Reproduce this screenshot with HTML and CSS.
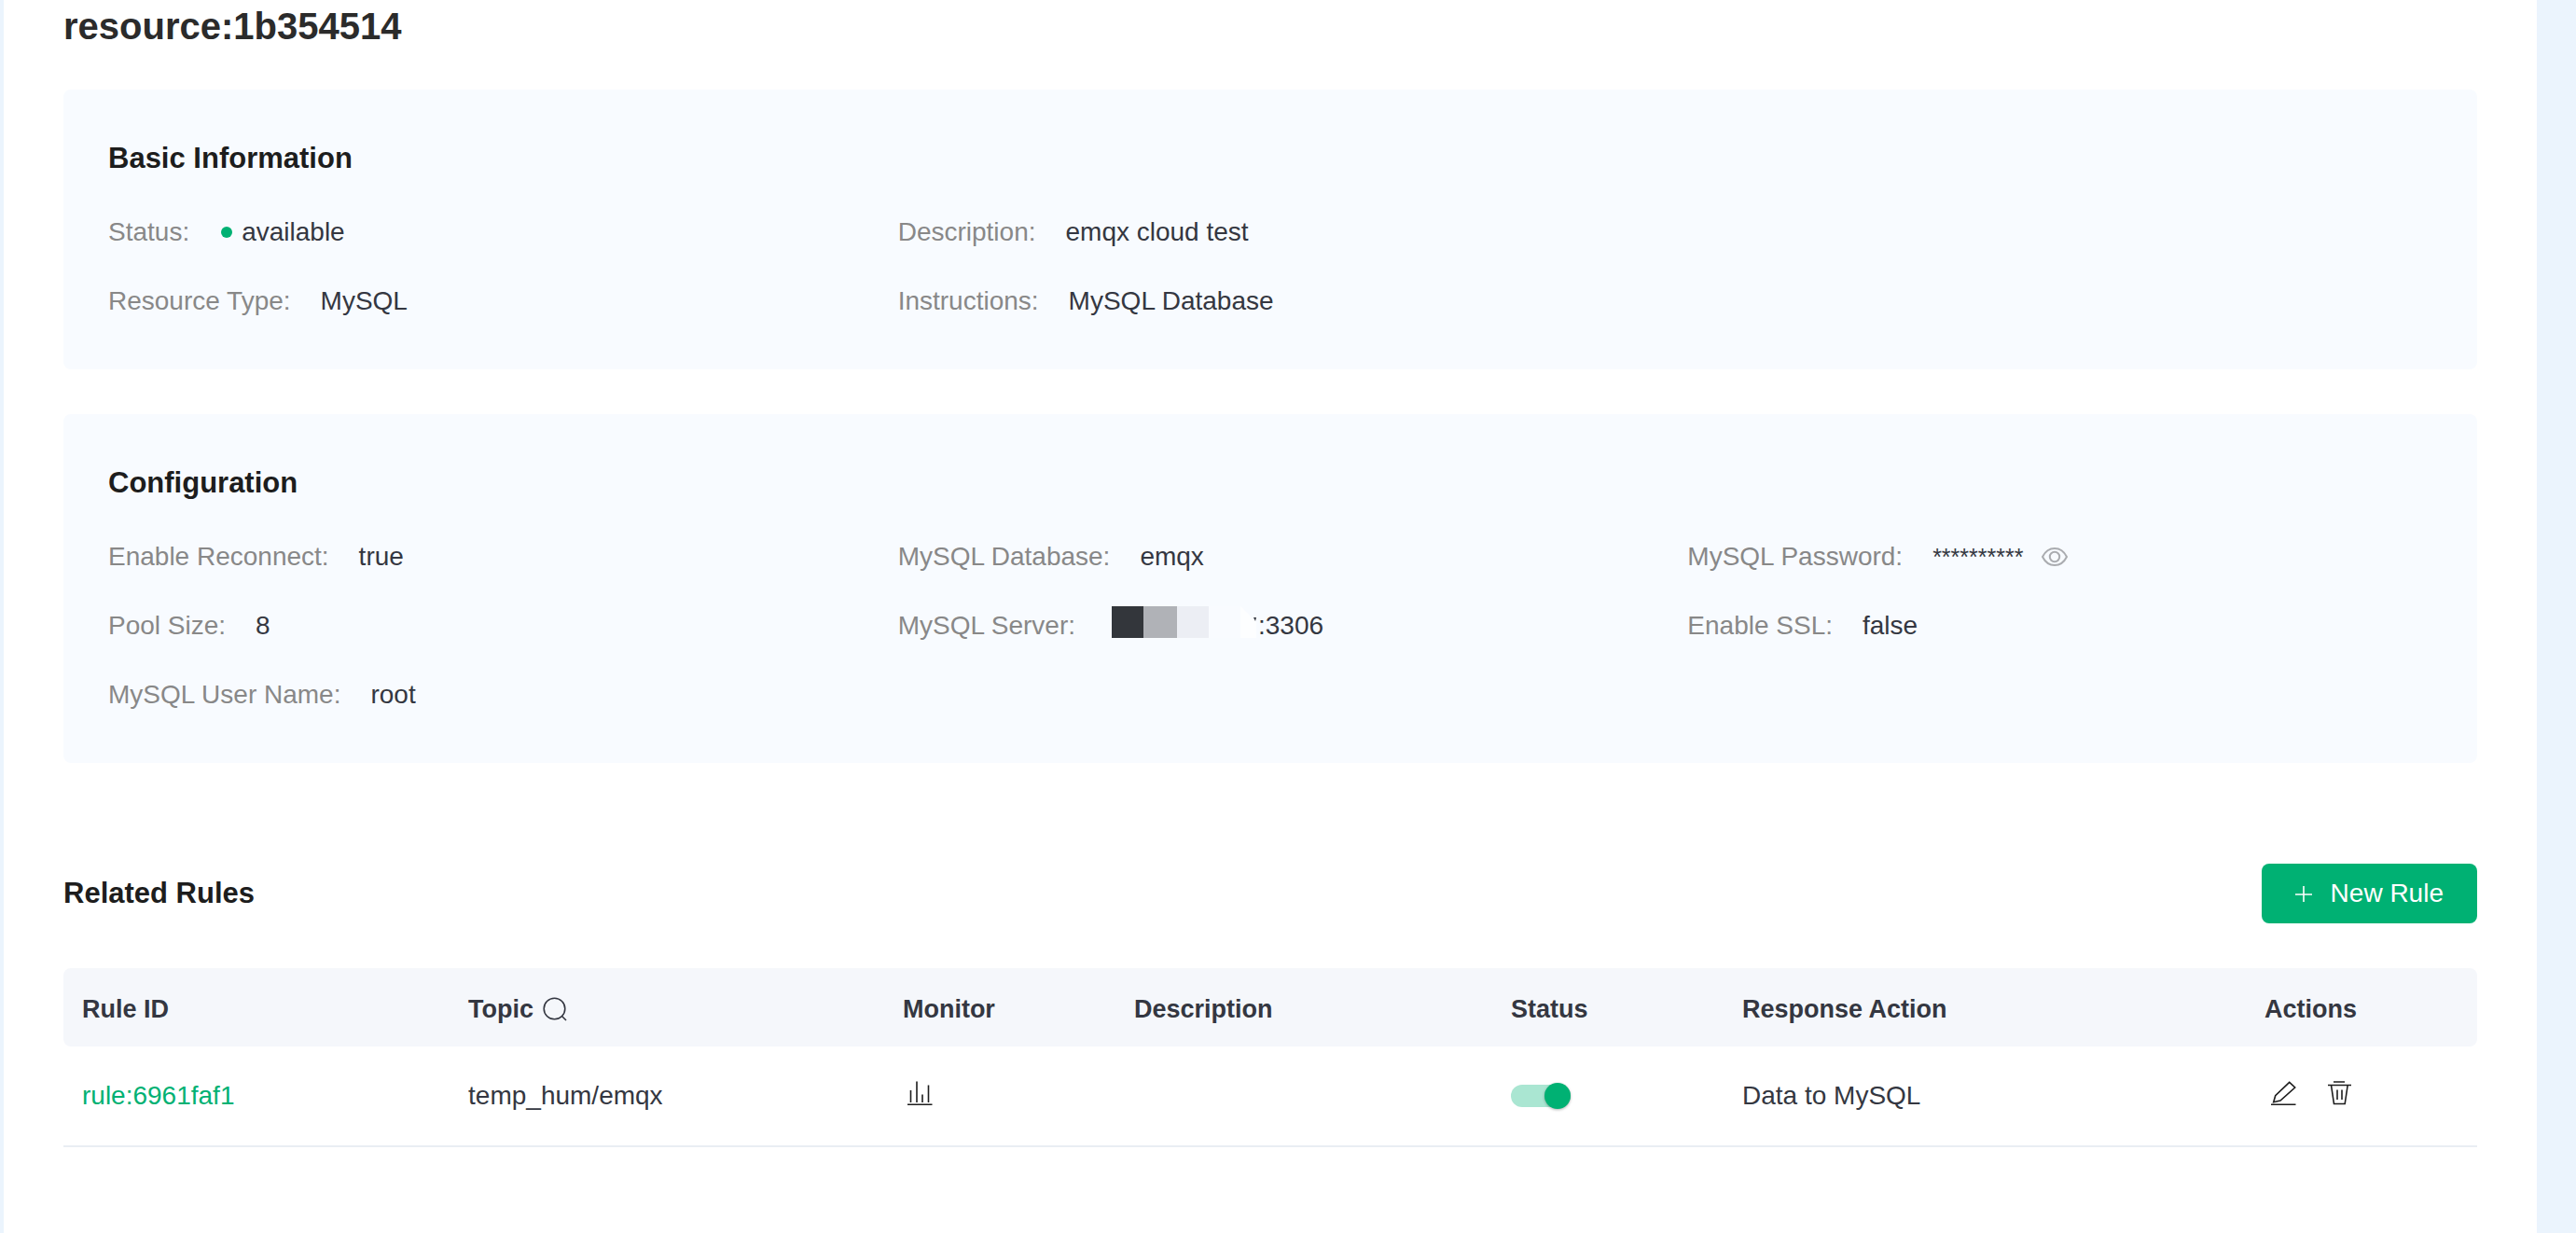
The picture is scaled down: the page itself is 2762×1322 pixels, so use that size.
FILE: index.html
```html
<!DOCTYPE html>
<html lang="en">
<head>
<meta charset="utf-8">
<title>resource:1b354514</title>
<link rel="stylesheet" href="styles.css">
</head>
<body>
<main class="page">
  <h1 class="page-title">resource:1b354514</h1>

  <section class="card">
    <h2 class="section-title">Basic Information</h2>
    <dl class="info-grid">
      <div class="info"><dt>Status:</dt><dd class="status"><span class="dot"></span>available</dd></div>
      <div class="info wide"><dt>Description:</dt><dd>emqx cloud test</dd></div>
      <div class="info"><dt>Resource Type:</dt><dd>MySQL</dd></div>
      <div class="info wide"><dt>Instructions:</dt><dd>MySQL Database</dd></div>
    </dl>
  </section>

  <section class="card">
    <h2 class="section-title">Configuration</h2>
    <dl class="info-grid">
      <div class="info"><dt>Enable Reconnect:</dt><dd>true</dd></div>
      <div class="info"><dt>MySQL Database:</dt><dd>emqx</dd></div>
      <div class="info"><dt>MySQL Password:</dt>
        <dd class="password"><span class="mask">**********</span>
          <button class="icon-button" type="button" aria-label="Show password">
            <svg class="eye" viewBox="0 0 28 28"><path d="M1 14C4 8 8.500 5 14 5s10 3 13 9c-3 6-7.500 9-13 9S4 20 1 14z"/><circle cx="14" cy="14" r="5.200"/></svg>
          </button>
        </dd>
      </div>
      <div class="info"><dt>Pool Size:</dt><dd>8</dd></div>
      <div class="info"><dt>MySQL Server:</dt>
        <dd class="server">
          <svg class="mosaic" viewBox="0 0 164 36" aria-hidden="true">
            <rect x="7" width="34" height="34" fill="#33363b"/>
            <rect x="41" width="36" height="34" fill="#b0b2b7"/>
            <rect x="77" width="34" height="34" fill="#eceef4"/>
            <rect x="111" width="34" height="34" fill="#f9fbff"/>
            <path d="M145 0l17 17v17h-17z" fill="#fdfeff"/>
            <path d="M159 12h3l-1 4z" fill="#33363f"/>
          </svg>:3306</dd>
      </div>
      <div class="info"><dt>Enable SSL:</dt><dd>false</dd></div>
      <div class="info"><dt>MySQL User Name:</dt><dd>root</dd></div>
    </dl>
  </section>

  <section class="rules">
    <header class="rules-head">
      <h2 class="section-title">Related Rules</h2>
      <button class="new-rule" type="button">
        <svg class="plus" viewBox="0 0 18 18" stroke-width="1.600"><path d="M9 1v17M0 10h18"/></svg>
        New Rule
      </button>
    </header>
    <table class="rules-table">
      <colgroup>
        <col class="col-id"><col class="col-topic"><col class="col-narrow"><col>
        <col class="col-narrow"><col class="col-action"><col class="col-narrow">
      </colgroup>
      <thead>
        <tr>
          <th scope="col">Rule ID</th>
          <th scope="col"><span class="topic">Topic
            <button class="icon-button" type="button" aria-label="Search topic">
              <svg class="search" viewBox="0 0 26 26" stroke-width="1.600"><circle cx="12.500" cy="12.500" r="11.300"/><path d="M20.500 20.500l4.500 4.500"/></svg>
            </button></span></th>
          <th scope="col">Monitor</th>
          <th scope="col">Description</th>
          <th scope="col">Status</th>
          <th scope="col">Response Action</th>
          <th scope="col">Actions</th>
        </tr>
      </thead>
      <tbody>
        <tr>
          <td><a class="rule-link" href="#">rule:6961faf1</a></td>
          <td>temp_hum/emqx</td>
          <td>
            <div class="actions">
              <button class="icon-button" type="button" aria-label="Monitor">
                <svg class="icon" viewBox="0 0 40 40" stroke-width="1.600"><path d="M8.500 17V30M15 7.500V30M21 21.500V30M27.500 11.500V30M5 32.300h26.500"/></svg>
              </button>
            </div>
          </td>
          <td></td>
          <td><input class="switch" type="checkbox" role="switch" aria-label="Rule enabled" checked></td>
          <td>Data to MySQL</td>
          <td>
            <div class="actions">
              <button class="icon-button" type="button" aria-label="Edit">
                <svg class="icon" viewBox="0 0 40 40" stroke-width="1.600"><path d="M26.700 8.300l6 5.700L17 28l-7.300 1.700 2-7zM7 32.300h26.500"/></svg>
              </button>
              <button class="icon-button" type="button" aria-label="Delete">
                <svg class="icon" viewBox="0 0 40 40" stroke-width="1.600"><path d="M14 8h12M8 11.500h25M11.500 11.500l3 20h11.700l3-20M18 16.500V27M23 16.500V27"/></svg>
              </button>
            </div>
          </td>
        </tr>
      </tbody>
    </table>
  </section>
</main>
</body>
</html>
```

FILE: styles.css
```css
* {
  box-sizing: border-box;
}

body {
  margin: 0;
  background: #ebf4fd;
  color: #343741;
  font: 28px/42px "Liberation Sans", Arial, sans-serif;
}

h1, h2, dl, dd {
  margin: 0;
}

button {
  padding: 0;
  border: 0;
  background: none;
  color: inherit;
  font: inherit;
  cursor: pointer;
}

svg {
  display: block;
  fill: none;
}

.page {
  min-height: 100vh;
  margin: 0 42px 0 4px;
  padding: 4px 64px 48px;
  background: #fff;
}

.page-title {
  margin-bottom: 44px;
  color: #2b2b2b;
  font-size: 40px;
  line-height: 48px;
}

.card {
  margin-bottom: 48px;
  padding: 48px 48px 52px;
  border-radius: 8px;
  background: #f8fbff;
}

.section-title {
  color: #1d1d1d;
  font-size: 31px;
  line-height: 52px;
}

.info-grid {
  display: grid;
  grid-template-columns: repeat(3, 1fr);
  gap: 32px 48px;
  margin-top: 32px;
}

.info {
  display: flex;
  gap: 32px;
}

.info.wide {
  grid-column: span 2;
}

.info dt {
  color: #888;
}

.status {
  display: flex;
  align-items: center;
  gap: 10px;
}

.dot {
  width: 12px;
  height: 12px;
  margin-left: 2px;
  border-radius: 50%;
  background: #00b173;
}

.password {
  display: flex;
  align-items: center;
  gap: 20px;
}

.mask {
  font-size: 25px;
}

.eye {
  width: 28px;
  height: 28px;
  stroke: #aaacb0;
  stroke-width: 2;
}

.server {
  display: flex;
  align-items: flex-start;
}

.mosaic {
  width: 164px;
  height: 36px;
}

.rules {
  margin-top: 108px;
}

.rules-head {
  display: flex;
  align-items: center;
  justify-content: space-between;
  margin-bottom: 48px;
}

.new-rule {
  display: flex;
  align-items: center;
  gap: 20px;
  height: 64px;
  padding: 0 36px;
  border-radius: 8px;
  background: #00b173;
  color: #fff;
}

.plus {
  width: 18px;
  height: 18px;
  stroke: #fff;
}

.rules-table {
  width: 100%;
  border-collapse: separate;
  border-spacing: 0;
  table-layout: fixed;
}

.col-id {
  width: 16%;
}

.col-topic {
  width: 18%;
}

.col-narrow {
  width: 248px;
}

.col-action {
  width: 560px;
}

.rules-table th {
  padding: 23px 20px 19px;
  background: #f5f7fb;
  font-size: 27px;
  text-align: left;
}

.rules-table th:first-child {
  border-radius: 8px 0 0 8px;
}

.rules-table th:last-child {
  border-radius: 0 8px 8px 0;
}

.rules-table td {
  height: 108px;
  padding: 0 20px;
  border-bottom: 2px solid #e9eef3;
  vertical-align: middle;
}

.topic {
  display: flex;
  align-items: center;
  gap: 10px;
}

.search {
  width: 26px;
  height: 26px;
  stroke: #343741;
}

.rule-link {
  color: #00b173;
  text-decoration: none;
}

.actions {
  display: flex;
  gap: 20px;
  padding-bottom: 6px;
}

.icon {
  width: 40px;
  height: 40px;
  stroke: #1d1d1d;
}

.switch {
  display: flex;
  align-items: center;
  width: 64px;
  height: 24px;
  margin: 0;
  border-radius: 12px;
  background: #aae6d2;
  appearance: none;
  cursor: pointer;
}

.switch::before {
  flex: none;
  width: 28px;
  height: 28px;
  border-radius: 50%;
  background: #00b173;
  box-shadow: 0 1px 3px rgba(0, 0, 0, 0.3);
  content: "";
}

.switch:checked {
  justify-content: flex-end;
}
```
